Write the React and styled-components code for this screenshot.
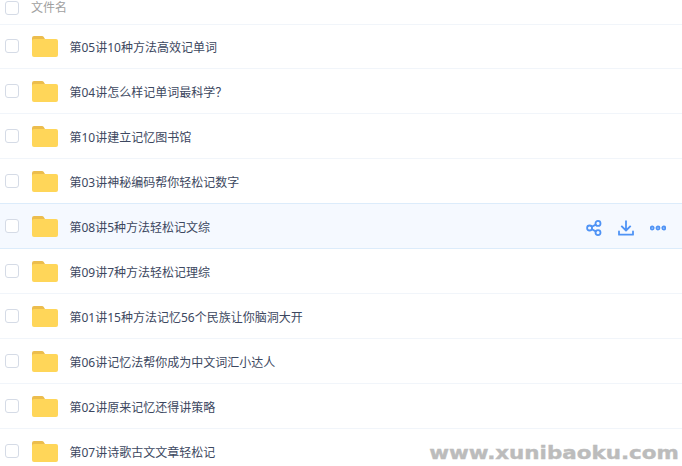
import React from 'react';
import styled, { createGlobalStyle } from 'styled-components';

const FILES = [
  '第05讲10种方法高效记单词',
  '第04讲怎么样记单词最科学？',
  '第10讲建立记忆图书馆',
  '第03讲神秘编码帮你轻松记数字',
  '第08讲5种方法轻松记文综',
  '第09讲7种方法轻松记理综',
  '第01讲15种方法记忆56个民族让你脑洞大开',
  '第06讲记忆法帮你成为中文词汇小达人',
  '第02讲原来记忆还得讲策略',
  '第07讲诗歌古文文章轻松记',
];

const ACTIVE_INDEX = 4;

const FolderIcon = () => (
  <FolderSvg viewBox="0 0 26 22">
    <path d="M0 2a2 2 0 0 1 2-2h8a2 2 0 0 1 1.6.8L13 3v2H0z" fill="#ecbd4d" />
    <path d="M0 5a2 2 0 0 1 2-2h22a2 2 0 0 1 2 2v14a2 2 0 0 1-2 2H2a2 2 0 0 1-2-2z" fill="#ffd659" />
  </FolderSvg>
);

const ShareIcon = () => (
  <ActionSvg viewBox="0 0 16 16">
    <circle cx="3.600" cy="8" r="2.500" />
    <circle cx="12" cy="3.400" r="2.500" />
    <circle cx="12" cy="12.600" r="2.500" />
    <path d="M5.800 6.800l4-2.200M5.800 9.200l4 2.200" />
  </ActionSvg>
);

const DownloadIcon = () => (
  <ActionSvg viewBox="0 0 16 16">
    <path d="M8 0.500v9.500M3.300 5.800L8 10.500l4.700-4.700" strokeLinecap="butt" />
    <path d="M1 11.500v3.200h14v-3.200" />
  </ActionSvg>
);

const MoreIcon = () => (
  <ActionSvg viewBox="0 0 16 16">
    <circle cx="2.200" cy="8" r="1.500" />
    <circle cx="8" cy="8" r="1.500" />
    <circle cx="13.800" cy="8" r="1.500" />
  </ActionSvg>
);

const App = () => (
  <Page>
    <GlobalStyle />
    <Header>
      <Checkbox />
      <HeaderLabel>文件名</HeaderLabel>
    </Header>
    {FILES.map((name, i) => (
      <Row key={name} $active={i === ACTIVE_INDEX}>
        <Checkbox />
        <FolderIcon />
        <FileName>{name}</FileName>
        {i === ACTIVE_INDEX && (
          <Actions>
            <ShareIcon />
            <DownloadIcon />
            <MoreIcon />
          </Actions>
        )}
      </Row>
    ))}
    <Watermark>www.xunibaoku.com</Watermark>
  </Page>
);

const GlobalStyle = createGlobalStyle`
  html, body {
    margin: 0;
    background: #fff;
  }
`;

const Page = styled.div`
  position: relative;
  width: 682px;
  height: 466px;
  overflow: hidden;
  font-family: "Noto Sans", "Noto Sans CJK SC", sans-serif;
`;

const Header = styled.div`
  display: flex;
  align-items: center;
  height: 14px;
  padding: 1px 0 9px 5px;
  border-bottom: 1px solid #f1f5fa;
`;

const Checkbox = styled.span`
  flex: none;
  box-sizing: border-box;
  width: 14px;
  height: 14px;
  border: 1px solid #d5dbe6;
  border-radius: 3px;
  background: #fff;
`;

const HeaderLabel = styled.span`
  margin: -1px 0 0 12px;
  font-size: 12px;
  line-height: 14px;
  color: #a0a0a0;
`;

const Row = styled.div`
  display: flex;
  align-items: center;
  box-sizing: border-box;
  height: 45px;
  padding: 0 16px 0 5px;
  border-bottom: 1px solid ${({ $active }) => ($active ? '#dcecfb' : '#f1f5fa')};
  background: ${({ $active }) => ($active ? '#f5f9ff' : '#fff')};
  box-shadow: ${({ $active }) => ($active ? '0 -1px 0 #dcecfb' : 'none')};

  &:nth-of-type(2) {
    height: 44px;
    padding-bottom: 1px;
  }
`;

const FolderSvg = styled.svg`
  flex: none;
  width: 26px;
  height: 22px;
  margin: 2px 0 0 13px;
`;

const FileName = styled.span`
  margin: 4px 0 0 11.500px;
  font-size: 12px;
  line-height: 16px;
  color: #3c4760;
`;

const Actions = styled.div`
  display: flex;
  align-items: center;
  gap: 16px;
  margin: 4px 0 0 auto;
`;

const ActionSvg = styled.svg`
  flex: none;
  width: 16px;
  height: 16px;
  fill: none;
  stroke: #4f93f5;
  stroke-width: 1.800;
  stroke-linecap: round;
  stroke-linejoin: round;
`;

const Watermark = styled.div`
  position: absolute;
  right: 3px;
  bottom: 2px;
  font-family: "DejaVu Sans", sans-serif;
  font-size: 18px;
  font-weight: 700;
  line-height: 22px;
  color: #bcbcbc;
  -webkit-text-stroke: 0.400px #bcbcbc;
  transform: scaleX(1.190);
  transform-origin: right center;
`;

export default App;
